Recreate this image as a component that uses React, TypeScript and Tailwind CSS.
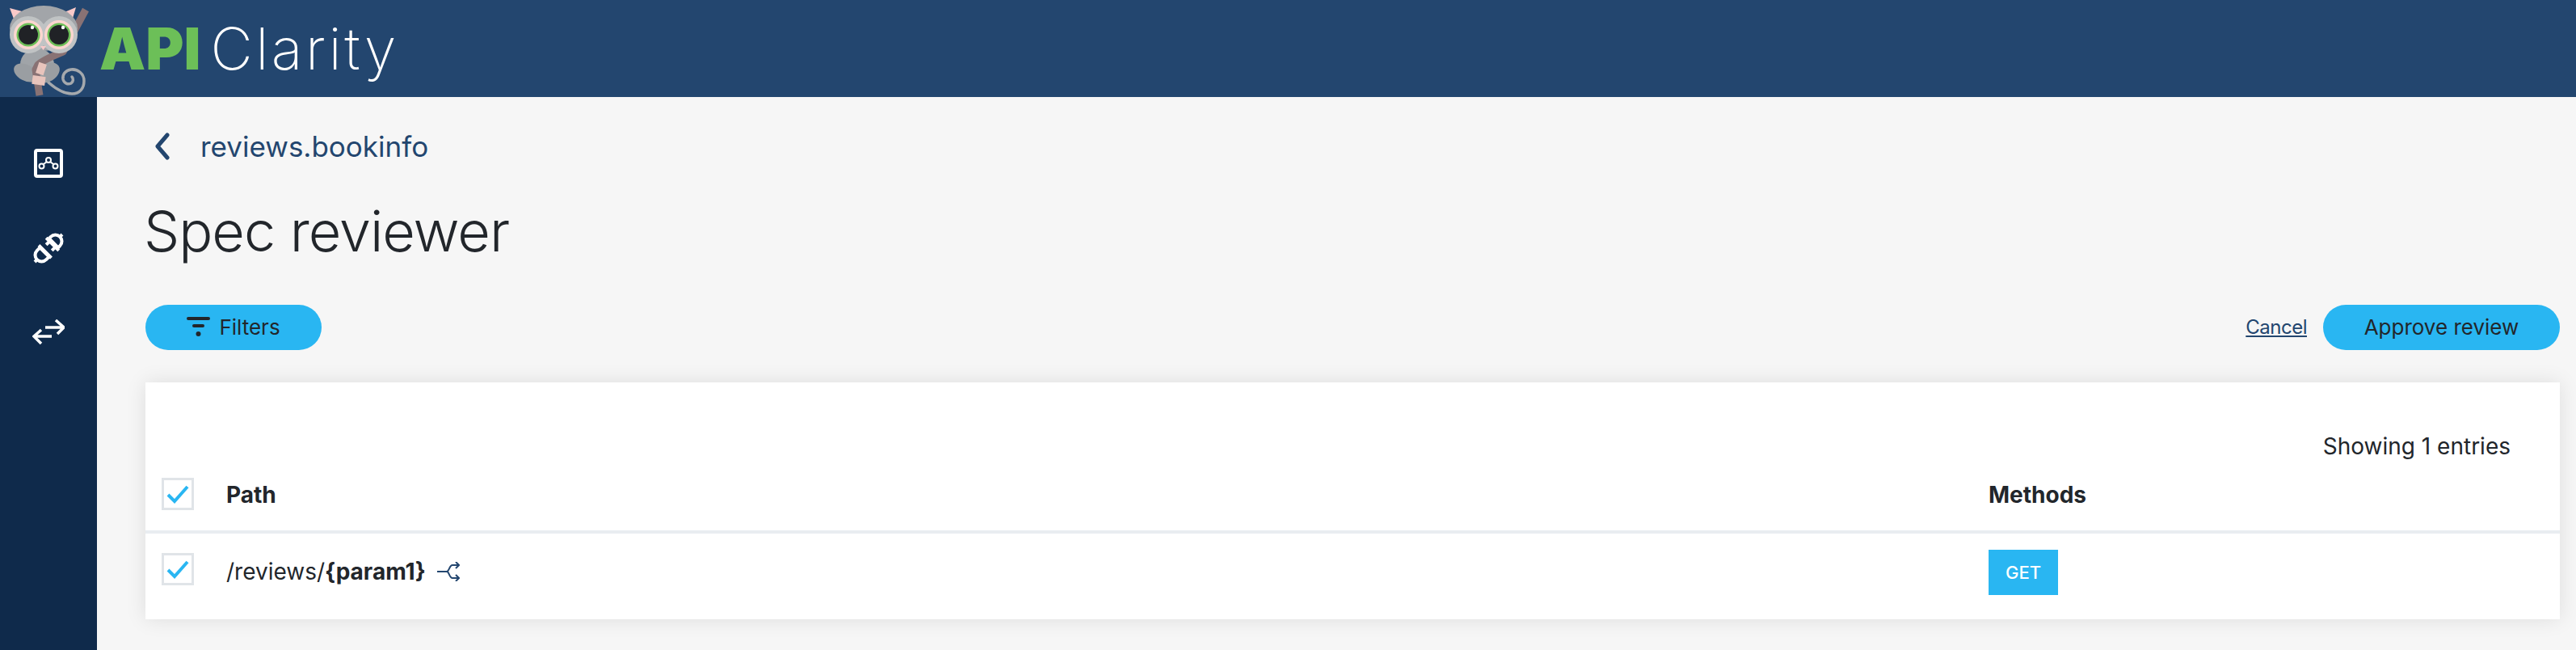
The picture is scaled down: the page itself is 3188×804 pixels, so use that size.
const headerBlue = 'bg-[#23466f]'

function Logo() {
  return (
    <svg width="112" height="120" viewBox="0 0 112 120" className="shrink-0">
      {/* tail */}
      <path d="M60 102c8 7 18 14 29 14 10 0 15-7 15-16 0-9-8-15-16-14-7 1-11 6-10 12 1 5 6 7 10 5 3-2 3-6 1-8" fill="none" stroke="#a5a9ad" strokeWidth="3.5" strokeLinecap="round" />
      {/* body */}
      <ellipse cx="46" cy="80" rx="21" ry="20" fill="#a0a4a8" />
      <ellipse cx="32" cy="90" rx="16" ry="10" transform="rotate(28 32 90)" fill="#9a9ea2" />
      <ellipse cx="59" cy="90" rx="16" ry="11" transform="rotate(-32 59 90)" fill="#9a9ea2" />
      {/* branch */}
      <path d="M106 12 78 64c-8 4-22 8-31 16l-3 6 5 32" fill="none" stroke="#897274" strokeWidth="9" strokeLinejoin="round" />
      <rect x="46" y="78" width="10" height="14" transform="rotate(18 51 85)" fill="#e8c4bc" />
      <rect x="40" y="94" width="16" height="11" transform="rotate(8 48 99)" fill="#e8c4bc" />
      {/* head */}
      <path d="M12 10 27 14 18 26Z" fill="#f9c9c9" />
      <path d="M94 9 80 15 89 26Z" fill="#f9c9c9" />
      <ellipse cx="54" cy="35" rx="42" ry="28" fill="#a2a5a9" />
      <circle cx="35" cy="43" r="23" fill="#c0c3c4" />
      <circle cx="73" cy="43" r="23" fill="#c0c3c4" />
      <circle cx="35" cy="43" r="18" fill="#fbd6d0" />
      <circle cx="73" cy="43" r="18" fill="#fbd6d0" />
      <circle cx="35" cy="43" r="14.5" fill="#6cbf58" />
      <circle cx="73" cy="43" r="14.5" fill="#6cbf58" />
      <circle cx="35" cy="43" r="12" fill="#202226" />
      <circle cx="73" cy="43" r="12" fill="#202226" />
      <circle cx="40" cy="34" r="2.2" fill="#fff" />
      <circle cx="78" cy="34" r="2.2" fill="#fff" />
      <path d="M50 57h7l-3.5 5Z" fill="#f9c9c9" />
    </svg>
  )
}

function CheckBox({ className = '' }: { className?: string }) {
  return (
    <div className={'flex h-10 w-10 shrink-0 items-center justify-center border-[3px] border-[#e0e4e8] bg-white ' + className}>
      <svg width="30" height="26" viewBox="0 0 30 26" fill="none">
        <path d="M3 14l8 8L27 4" stroke="#29b6f2" strokeWidth="4" />
      </svg>
    </div>
  )
}

export default function App() {
  return (
    <div className="flex h-[804px] w-[3188px] flex-col overflow-hidden bg-[#f6f6f6] font-['Inter',sans-serif] text-[#22262b]">
      <header className={`flex h-[120px] shrink-0 items-center ${headerBlue}`}>
        <Logo />
        <div className="ml-[11px] flex items-baseline">
          <span className="text-[72px] leading-none font-black text-[#6cbf58]">API</span>
          <span className="ml-[12px] text-[72px] leading-none font-extralight tracking-[3.5px] text-white">Clarity</span>
        </div>
      </header>
      <div className="flex flex-1">
        <nav className="flex w-[120px] shrink-0 flex-col items-center bg-[#0f2a4b] pt-[64px]">
          <svg width="36" height="36" viewBox="0 0 36 36" fill="none" stroke="#fff">
            <rect x="2" y="2" width="32" height="32" rx="2" strokeWidth="4" />
            <circle cx="18" cy="14" r="3" strokeWidth="2" />
            <circle cx="9.500" cy="21.500" r="3" strokeWidth="2" />
            <circle cx="26.500" cy="21.500" r="3" strokeWidth="2" />
            <path d="M16 16l-4 3M20 16l4 3" strokeWidth="2" />
          </svg>
          <svg className="mt-[68px]" width="38" height="38" viewBox="0 0 38 38" fill="none" stroke="#fff" strokeWidth="4">
            <g transform="rotate(45 19 19)">
              <path d="M11 10V7a8 8 0 0 1 16 0v3Z" strokeLinejoin="round" />
              <path d="M8 12h22M19 -1v-4" />
              <path d="M14 13v5M24 13v5" />
              <path d="M8 25h22M11 26v5a8 8 0 0 0 16 0v-5Z" strokeLinejoin="round" />
              <path d="M19 39v4" />
            </g>
          </svg>
          <svg className="mt-[69px]" width="40" height="32" viewBox="0 0 40 32" fill="none" stroke="#fff" strokeWidth="3.500">
            <path d="M16 10h23M29 1l10 9-8 8" />
            <path d="M24 21H2M11 13l-9 8 9 9" />
          </svg>
        </nav>
        <main className="flex min-w-0 flex-1 flex-col pr-5 pl-[60px]">
          <div className="mt-[45px] flex h-[32px] items-center">
            <svg width="24" height="34" viewBox="0 0 24 34" fill="none" className="ml-[9px]">
              <path d="M18 3 6 17l12 14" stroke="#23466f" strokeWidth="5" strokeLinecap="round" strokeLinejoin="round" />
            </svg>
            <span className="ml-[35px] text-[35px] leading-none text-[#23466f]">reviews.bookinfo</span>
          </div>
          <h1 className="mt-[47px] -ml-[2px] text-[70px] leading-[84px] font-light tracking-[-1px]">Spec reviewer</h1>
          <div className="mt-[49px] flex h-14 items-center">
            <button className="flex h-14 w-[218px] items-center justify-center gap-[10px] rounded-full bg-[#29b6f2] pb-[2px] text-[26px]">
              <svg width="30" height="28" viewBox="0 0 30 28" fill="#22262b">
                <rect x="0" y="2" width="29" height="4" rx="2" />
                <rect x="7" y="11" width="15" height="4" rx="2" />
                <circle cx="14.500" cy="23" r="3" />
              </svg>
              Filters
            </button>
            <a className="mr-5 ml-auto text-[24px] tracking-[-0.5px] text-[#23466f] underline">Cancel</a>
            <button className="h-14 w-[293px] rounded-full bg-[#29b6f2] pb-[2px] text-[26px]">Approve review</button>
          </div>
          <section className="mt-10 h-[293px] bg-white shadow-[0_0_24px_rgba(0,0,0,0.1)]">
            <div className="flex h-[97px] items-end justify-end pr-[61px] text-[28px] leading-[36px]">Showing 1 entries</div>
            <div className="flex h-[90px] items-center border-b-4 border-[#e9edf1] pb-1 pl-5 text-[28px] font-bold">
              <CheckBox />
              <div className="ml-10 w-[2181px] pt-[2px]">Path</div>
              <div className="pt-[2px]">Methods</div>
            </div>
            <div className="flex h-[106px] items-center pb-[10px] pl-5 text-[28px]">
              <CheckBox className="mb-2" />
              <div className="ml-10 flex w-[2181px] items-center pb-[2px]">
                <span>/reviews/<b>{'{param1}'}</b></span>
                <svg className="ml-[14px]" width="28" height="24" viewBox="0 0 28 24" fill="none" stroke="#23466f" strokeWidth="2">
                  <path d="M0 12h12c3 0 3-8 7-8h8M23 0l4 4-4 4" />
                  <path d="M12 12c3 0 3 8 7 8h8M23 16l4 4-4 4" />
                </svg>
              </div>
              <div className="flex h-14 w-[86px] items-center justify-center bg-[#29b6f2] text-[22px] font-medium text-white">GET</div>
            </div>
          </section>
        </main>
      </div>
    </div>
  )
}
